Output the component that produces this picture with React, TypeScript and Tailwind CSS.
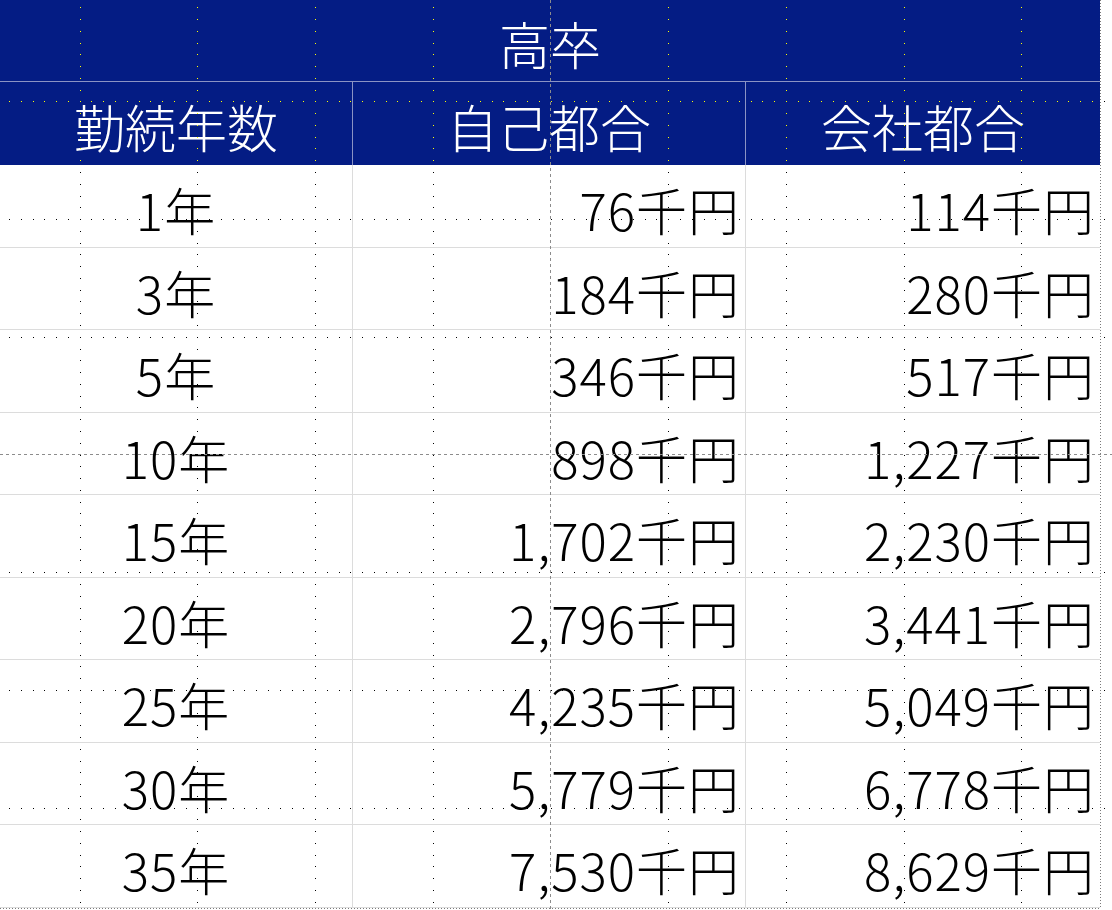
import React from "react";

const rows: [string, string, string][] = [
  ["1年", "76千円", "114千円"],
  ["3年", "184千円", "280千円"],
  ["5年", "346千円", "517千円"],
  ["10年", "898千円", "1,227千円"],
  ["15年", "1,702千円", "2,230千円"],
  ["20年", "2,796千円", "3,441千円"],
  ["25年", "4,235千円", "5,049千円"],
  ["30年", "5,779千円", "6,778千円"],
  ["35年", "7,530千円", "8,629千円"],
];

// guide grid overlay (dotted lines like the slide editor guides)
const PITCH = 117.7;
const DOT = PITCH / 10;
const CX = 550.5;
const CY = 454.5;

function GuideOverlay() {
  const dots: React.ReactNode[] = [];
  const xs: number[] = [];
  const ys: number[] = [];
  for (let i = -4; i <= 4; i++) if (i !== 0) xs.push(CX + i * PITCH);
  for (let i = -3; i <= 3; i++) if (i !== 0) ys.push(CY + i * PITCH);

  const color = (x: number, y: number) =>
    y < 165 && x < 1100 ? "#ffff00" : "#000000";

  xs.forEach((x, xi) => {
    for (let k = -40; k <= 40; k++) {
      const y = CY + k * DOT;
      if (y < 0 || y > 907) continue;
      dots.push(
        <rect key={`v${xi}-${k}`} x={Math.round(x)} y={Math.round(y)} width={1} height={1} fill={color(x, y)} />
      );
    }
  });
  ys.forEach((y, yi) => {
    for (let k = -50; k <= 50; k++) {
      const x = CX + k * DOT;
      if (x < 0 || x > 1111) continue;
      dots.push(
        <rect key={`h${yi}-${k}`} x={Math.round(x)} y={Math.round(y)} width={1} height={1} fill={color(x, y)} />
      );
    }
  });

  return (
    <svg className="absolute inset-0 pointer-events-none" width={1112} height={910}>
      {dots}
      {/* centre guides */}
      <line x1={550.5} y1={0} x2={550.5} y2={910} stroke="#8c8c8c" strokeWidth={1} strokeDasharray="3 3" />
      <line x1={0} y1={454.5} x2={1112} y2={454.5} stroke="#8c8c8c" strokeWidth={1} strokeDasharray="3 3" />
      {/* selection frame */}
      <line x1={1100.5} y1={0} x2={1100.5} y2={909} stroke="#7a7a7a" strokeWidth={1} strokeDasharray="1 2" />
      <line x1={0} y1={908.5} x2={1101} y2={908.5} stroke="#7a7a7a" strokeWidth={1} strokeDasharray="1 2" />
    </svg>
  );
}

export default function App() {
  return (
    <div
      className="relative w-[1112px] h-[910px] bg-white overflow-hidden font-light"
      style={{ fontFamily: '"Noto Sans CJK JP", "Noto Sans", sans-serif' }}
    >
      <div className="w-[1100px] flex flex-col">
        <div className="h-[82px] bg-[#041c84] border-b border-[#8b93c4] flex items-center justify-center pt-[6px] text-white text-[51px] leading-none">
          高卒
        </div>
        <div className="h-[83px] bg-[#041c84] grid grid-cols-[353px_393px_354px] text-white text-[51px] leading-none">
          <div className="flex items-center justify-center pt-[6px] border-r border-[#8b93c4]">勤続年数</div>
          <div className="flex items-center justify-center pt-[6px] border-r border-[#8b93c4]">自己都合</div>
          <div className="flex items-center justify-center pt-[6px]">会社都合</div>
        </div>
        {rows.map(([y, a, b]) => (
          <div
            key={y}
            className="h-[82.5px] grid grid-cols-[353px_393px_354px] text-black text-[51px] leading-none border-b border-[#dcdcdc]"
          >
            <div className="flex items-center justify-center pt-[8px] border-r border-[#dcdcdc] tracking-[1px]">{y}</div>
            <div className="flex items-center justify-end pr-[5px] pt-[8px] border-r border-[#dcdcdc] tracking-[1px]">{a}</div>
            <div className="flex items-center justify-end pr-[5px] pt-[8px] tracking-[1px]">{b}</div>
          </div>
        ))}
      </div>
      <GuideOverlay />
    </div>
  );
}
